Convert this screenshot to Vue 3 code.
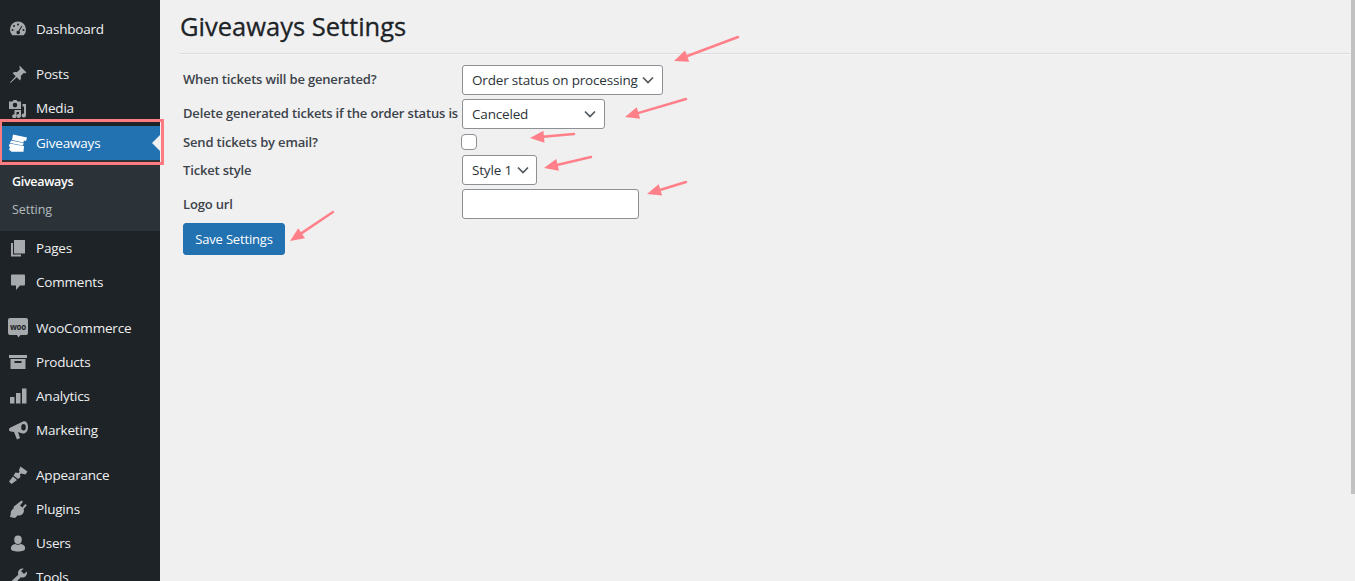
<script setup>
const groups = [
  { items: [{ t: 'Dashboard', i: 'dash' }] },
  { items: [{ t: 'Posts', i: 'pin' }, { t: 'Media', i: 'media' }, { t: 'Giveaways', i: 'ticket', cur: true }, { t: 'Pages', i: 'pages' }, { t: 'Comments', i: 'comment' }] },
  { items: [{ t: 'WooCommerce', i: 'woo' }, { t: 'Products', i: 'box' }, { t: 'Analytics', i: 'bars' }, { t: 'Marketing', i: 'mega' }] },
  { items: [{ t: 'Appearance', i: 'brush' }, { t: 'Plugins', i: 'plug' }, { t: 'Users', i: 'user' }, { t: 'Tools', i: 'wrench' }] }
]
const icons = {
  dash: 'M10 2.5a8 8 0 0 0-8 8c0 2.2.9 4.2 2.300 5.700h11.400A8 8 0 0 0 18 10.500a8 8 0 0 0-8-8zM10 4.500a1 1 0 1 1 0 2 1 1 0 0 1 0-2zM6 6a1 1 0 1 1 0 2 1 1 0 0 1 0-2zM4.500 10a1 1 0 1 1 0 2 1 1 0 0 1 0-2zM15.500 10a1 1 0 1 1 0 2 1 1 0 0 1 0-2zM13.500 6.800l.9.500-3 5a1.700 1.700 0 1 1-1-.5z',
  pin: 'M11.500 1.500l7 7-1.500 1-1-.7-3.300 3.300c.6 1.600.3 3-.7 4.400l-3.200-3.200-6.300 5.700-.5-.5 5.700-6.300-3.200-3.200c1.400-1 2.800-1.300 4.400-.7l3.300-3.300-.7-1z',
  media: 'M1 3.500h3.500l1-1.500h3l1 1.500H13v7.500H1zM7 4.800a2.300 2.300 0 1 0 0 4.600 2.300 2.300 0 0 0 0-4.600zM14.500 6h3.500v11.500a2.200 2 0 1 1-2-2V8.500h-1.500zM6.500 12h6.500v6a2.200 2 0 1 1-2-2v-2H8.500v4.200a2.200 2 0 1 1-2-2z',
  pages: 'M6 2h11v13.500H6zM3 5h2v11.500h8v2H3z',
  comment: 'M4 2.500h12a1 1 0 0 1 1 1v9a1 1 0 0 1-1 1h-4l-4 4.500v-4.500H4a1 1 0 0 1-1-1v-9a1 1 0 0 1 1-1z',
  box: 'M1 3h18v3H1zM2.500 7h15v10h-15zM6.500 9v2h7V9z',
  bars: 'M2 11h4.500v6.500H2zM8 7h4.500v10.500H8zM14 2.500h4.500v15H14z',
  mega: 'M15 1.500C18 .5 20 3 20 7s-2 6.500-5 6.500c-1.500 0-3-1-5-1.500l2 6-3 1.500-3-7.500-3-.5C1.500 11.500 1 10.500 1 9.500c0-1 .5-1.500 1.500-2zM15.500 4a2.300 3.300 0 1 0 0 6.600 2.300 3.300 0 0 0 0-6.600z',
  brush: 'M12.500 1.500L19.500 6.500 17.500 9.500 13 8.500 12 9.500 12.500 12 10 14 5.500 10.500 7.500 7.500 10.500 8 11.500 7 11 5zM5 11.500L9 15 3.500 19 1 16.500z',
  plug: 'M13.500 1.500l1.500 1.300-3 3.700 2.300 2 3-3.500 1.500 1.300-3.200 3.700c.8 2 .2 3.800-1.300 5.200-1.400 1.200-3 1.500-4.500 1L7 19 2 18l.8-3.500c-.3-1.500.5-3 1.800-4.200L6 9l-.7-1 1.300-1 6.900-5.500z',
  user: 'M10 2.500a3.800 4.200 0 1 1 0 8.400 3.800 4.200 0 0 1 0-8.400zM3 14.500c0-2 2-3 4-3.500 1.800 1 4.200 1 6 0 2 .5 4 1.500 4 3.500V16c0 1.500-3 2.500-7 2.500S3 17.500 3 16z',
  wrench: 'M14.500 1.500c-2.500 0-4.500 2-4.500 4.500 0 .6.100 1.200.3 1.700L2.500 15c-1 1-1 2 0 3s2 1 3 0l7.300-7.800c.5.200 1.100.3 1.700.3 2.500 0 4.500-2 4.500-4.500 0-.6-.100-1.100-.3-1.600L16 7l-3-3 2.700-2.300c-.4-.1-.8-.2-1.200-.2z'
}
const arrows = [
  [738, 37, 674, 61],
  [686, 99, 625, 117],
  [574, 134, 530, 138],
  [591, 157, 544, 168],
  [686, 182, 647, 194],
  [333, 212, 290, 241]
]
function head(a) {
  const [x1, y1, x2, y2] = a
  const d = Math.hypot(x2 - x1, y2 - y1)
  const ux = (x2 - x1) / d, uy = (y2 - y1) / d
  const bx = x2 - ux * 14, by = y2 - uy * 14
  return `${x2},${y2} ${bx - uy * 6},${by + ux * 6} ${bx + uy * 6},${by - ux * 6}`
}
function shaft(a) {
  const [x1, y1, x2, y2] = a
  const d = Math.hypot(x2 - x1, y2 - y1)
  const ux = (x2 - x1) / d, uy = (y2 - y1) / d
  return `${x1},${y1} ${x2 - ux * 10},${y2 - uy * 10}`
}
</script>

<template>
  <div class="page">
    <aside class="menu">
      <div v-for="(g, gi) in groups" :key="gi" class="group">
        <template v-for="m in g.items" :key="m.t">
          <div class="item" :class="{ current: m.cur }">
            <svg v-if="m.i === 'ticket'" class="ico" viewBox="0 0 20 20" fill="#fff">
              <path d="M5 1.500L19 4.500 18 8 16 7.500 15.500 9.500 4 7z" />
              <path d="M3 7.500L15.500 10 15 12.500 2 10z" />
              <path d="M1.500 10.800L3 10.800 15.500 13 16 13 15.500 18.800 3.500 18.800 1 16.500 2 14.500 1 13z" />
            </svg>
            <svg v-else-if="m.i === 'woo'" class="ico woo" viewBox="0 0 20 20">
              <path fill="#a7aaad" d="M2 0h16a2 2 0 0 1 2 2v13a2 2 0 0 1-2 2h-5.500l-2 2.500-1.500-2.500H2a2 2 0 0 1-2-2V2a2 2 0 0 1 2-2z" />
              <text x="10" y="11.500" class="wootext">woo</text>
            </svg>
            <svg v-else class="ico" viewBox="0 0 20 20" fill="#a7aaad" fill-rule="evenodd">
              <path :d="icons[m.i]" />
            </svg>
            <span class="label">{{ m.t }}</span>
          </div>
          <div v-if="m.cur" class="sub">
            <div class="sub-item strong">Giveaways</div>
            <div class="sub-item">Setting</div>
          </div>
        </template>
      </div>
    </aside>

    <main class="main">
      <h1 class="title">Giveaways Settings</h1>
      <hr class="rule" />
      <form class="form" @submit.prevent>
        <div class="row r1">
          <label>When tickets will be generated?</label>
          <div class="select w1"><span>Order status on processing</span><svg viewBox="0 0 12 8"><path d="M1 1.500l5 5 5-5" /></svg></div>
        </div>
        <div class="row r2">
          <label>Delete generated tickets if the order status is</label>
          <div class="select w2"><span>Canceled</span><svg viewBox="0 0 12 8"><path d="M1 1.500l5 5 5-5" /></svg></div>
        </div>
        <div class="row r3">
          <label>Send tickets by email?</label>
          <div class="check"></div>
        </div>
        <div class="row r4">
          <label>Ticket style</label>
          <div class="select w3"><span>Style 1</span><svg viewBox="0 0 12 8"><path d="M1 1.500l5 5 5-5" /></svg></div>
        </div>
        <div class="row r5">
          <label>Logo url</label>
          <div class="input"></div>
        </div>
        <button type="button" class="save">Save Settings</button>
      </form>
    </main>

    <div class="scrollbar"></div>
    <div class="mark"></div>
    <div class="pointer"></div>
    <svg class="arrows" viewBox="0 0 1355 581" width="1355" height="581">
      <g v-for="(a, i) in arrows" :key="i">
        <polyline :points="shaft(a)" />
        <polygon :points="head(a)" />
      </g>
    </svg>
  </div>
</template>

<style scoped>
.page {
  position: relative;
  width: 1355px;
  height: 581px;
  overflow: hidden;
  display: flex;
  background: #f0f0f1;
  font-family: "Open Sans", "Noto Sans", sans-serif;
  font-size: 13px;
  color: #3c434a;
}
.menu {
  width: 160px;
  flex: none;
  background: #1d2327;
  padding-top: 12px;
  box-sizing: border-box;
}
.group { margin-bottom: 11px; }
.group:nth-child(2) { margin-bottom: 12px; }
.item {
  height: 34px;
  display: flex;
  align-items: center;
  color: #f0f0f1;
  font-size: 13.500px;
  letter-spacing: -0.2px;
}
.item.current {
  background: #2271b1;
  color: #fff;
  margin-top: 1px;
}
.ico {
  width: 20px;
  height: 20px;
  margin-left: 8px;
  margin-right: 8px;
  flex: none;
}
.wootext {
  font-size: 8px;
  font-weight: 700;
  fill: #1d2327;
  text-anchor: middle;
  font-family: "Open Sans", sans-serif;
}
.sub {
  background: #2c3338;
  height: 71px;
  padding-top: 8px;
  box-sizing: border-box;
}
.sub-item {
  height: 28px;
  line-height: 28px;
  padding-left: 12px;
  font-size: 12.500px;
  letter-spacing: -0.05px;
  color: rgba(240, 246, 252, 0.7);
}
.sub-item.strong { color: #fff; font-weight: 600; letter-spacing: -0.3px; }
.main {
  flex: 1;
  min-width: 0;
  padding-left: 20px;
  padding-right: 4px;
}
.title {
  margin: 0;
  padding-top: 10px;
  font-size: 25.500px;
  line-height: 32px;
  font-weight: 400;
  color: #1d2327;
  letter-spacing: 0;
  -webkit-text-stroke: 0.3px #1d2327;
}
.rule {
  margin: 11px 1px 0 0;
  border: 0;
  border-top: 1px solid #dcdcde;
  border-bottom: 1px solid #f6f7f7;
}
.form { padding: 10px 0 0 3px; }
.row { display: flex; align-items: center; }
.row label {
  width: 279px;
  flex: none;
  font-size: 13px;
  font-weight: 600;
  letter-spacing: -0.17px;
  color: #3c434a;
  white-space: nowrap;
}
.r1 { height: 30px; margin-bottom: 4px; align-items: flex-start; }
.r2 { height: 30px; align-items: flex-start; }
.r1 label { padding-top: 5px; }
.r2 label { padding-top: 5px; }
.r3 { height: 26px; }
.r4 { height: 30px; margin-bottom: 4px; }
.r5 { height: 30px; margin-bottom: 4px; }
.select, .input {
  height: 30px;
  box-sizing: border-box;
  border: 1px solid #8c8f94;
  border-radius: 3px;
  background: #fff;
  font-size: 13.500px;
  color: #2c3338;
}
.select {
  display: flex;
  align-items: center;
  justify-content: space-between;
  padding: 0 8px 0 9px;
  letter-spacing: -0.18px;
  white-space: nowrap;
}
.select svg { width: 12px; height: 8px; flex: none; }
.select path { fill: none; stroke: #50575e; stroke-width: 1.700; }
.w1 { width: 201px; }
.w2 { width: 143px; padding-right: 8px; }
.w3 { width: 75px; padding-right: 7px; }
.input { width: 177px; }
.check {
  width: 16px;
  height: 16px;
  box-sizing: border-box;
  margin-left: -1px;
  border: 1px solid #8c8f94;
  border-radius: 4px;
  background: #fff;
}
.save {
  display: block;
  width: 102px;
  height: 32px;
  padding: 0;
  border: 1px solid #2271b1;
  border-radius: 3px;
  background: #2271b1;
  color: #fff;
  font-family: inherit;
  font-size: 13px;
  letter-spacing: -0.17px;
}
.scrollbar {
  position: absolute;
  top: 0;
  right: 0;
  width: 4px;
  height: 494px;
  background: #c1c1c1;
}
.mark {
  position: absolute;
  left: 0;
  top: 119px;
  width: 164px;
  height: 46px;
  box-sizing: border-box;
  border: 3px solid #ff7b82;
  border-left-width: 2px;
}
.pointer {
  position: absolute;
  left: 152px;
  top: 135px;
  border: 8px solid transparent;
  border-left: 0;
  border-right-color: #f0f0f1;
}
.arrows { position: absolute; left: 0; top: 0; pointer-events: none; }
.arrows polyline { fill: none; stroke: #ff8089; stroke-width: 2.500; stroke-linecap: round; }
.arrows polygon { fill: #ff8089; }
</style>
